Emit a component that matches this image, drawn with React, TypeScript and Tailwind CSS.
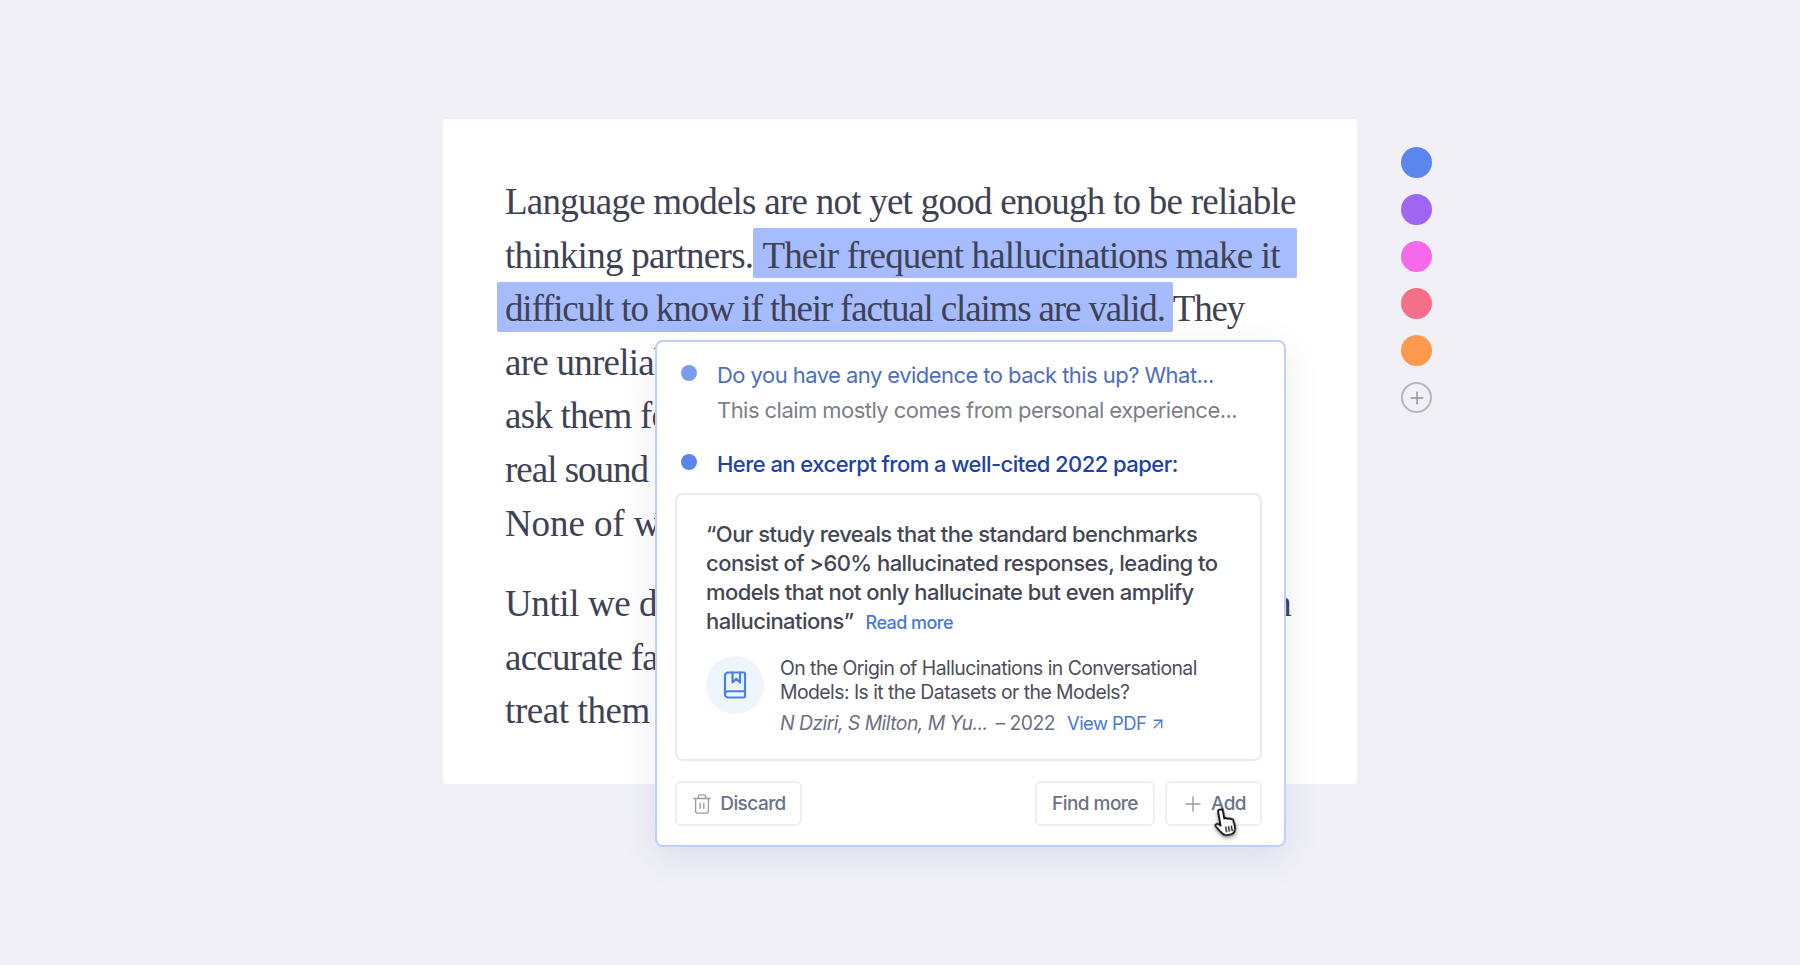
import { ArrowUpRight, BookMarked, Plus, Trash2 } from "lucide-react";

const swatches = ["bg-[#5b87ec]", "bg-[#a066f2]", "bg-[#f569ea]", "bg-[#f66f88]", "bg-[#fd9a4f]"];

const lines = [
  { id: "l1", cls: "tracking-[-0.75px]", text: <>Language models are not yet good enough to be reliable</> },
  {
    id: "l2",
    cls: "tracking-[-0.7px]",
    text: (
      <>
        thinking partners.
        <span className="rounded-[2px] bg-[#a6bcff] pb-[2px] pl-[9px] pr-[17px] pt-[7px] tracking-[-0.85px]">Their frequent hallucinations make it</span>
      </>
    ),
  },
  {
    id: "l3",
    cls: "tracking-[-1.15px]",
    text: (
      <>
        <span className="-ml-2 rounded-[2px] bg-[#a6bcff] pb-[3px] pl-2 pr-2 pt-[6px]">
          difficult to know if their factual claims are valid.
        </span>
        They
      </>
    ),
  },
  { id: "l4", cls: "tracking-[-0.75px]", text: <>are unreliable</> },
  { id: "l5", cls: "tracking-[-0.75px]", text: <>ask them for</> },
  { id: "l6", cls: "tracking-[-1px]", text: <>real sound</> },
  { id: "l7", cls: "tracking-[-0.1px]", text: <>None of which</> },
];

const secondLines = [
  { id: "s1", cls: "tracking-[-0.4px]", text: "Until we draw on more reliable sources of information" },
  { id: "s2", cls: "tracking-[-0.75px]", text: "accurate facts" },
  { id: "s3", cls: "tracking-[-0.4px]", text: "treat them with" },
];

function Swatches() {
  return (
    <div className="ml-[44px] mt-[28px] flex flex-col gap-4">
      {swatches.map((color) => (
        <span key={color} className={`h-[31px] w-[31px] rounded-full ${color}`} />
      ))}
      <span className="flex h-[31px] w-[31px] items-center justify-center rounded-full border-2 border-[#b5b6c6] text-[#8e90a3]">
        <Plus size={20} strokeWidth={1.75} />
      </span>
    </div>
  );
}

function HandCursor() {
  return (
    <svg
      className="absolute left-[556px] top-[464px] rotate-[-10deg] drop-shadow-[0_2px_2px_rgba(0,0,0,0.45)]"
      width="27"
      height="32"
      viewBox="0 0 24 30"
      fill="none"
    >
      <path
        d="M8.5 2.5c1.2 0 2 .9 2 2v7l1-.3c1 0 1.6.4 1.9 1 .9-.5 2.2-.2 2.6.8 1-.4 2.2.1 2.5 1.2l.5 7c0 3-2 6-5 6h-4c-2 0-3-1-4-2.5l-4.5-7c-.7-1.2 0-2.2.9-2.5 1-.2 1.8.2 2.6 1.2l.9 1V4.5c0-1.1.8-2 2-2z"
        fill="white"
        stroke="black"
        strokeWidth="1.6"
        strokeLinejoin="round"
      />
      <path d="M10.5 19.5v4.5M13.2 19.5v4.5M15.9 19.5v4.5" stroke="black" strokeWidth="1.2" strokeLinecap="round" />
    </svg>
  );
}

function Popup() {
  return (
    <div className="absolute left-[212px] top-[221px] h-[507px] w-[631px] rounded-lg border-2 border-[#c0cff7] bg-white px-[18px] font-['Inter',sans-serif] tracking-[-0.55px] shadow-[0_10px_36px_rgba(60,70,120,0.1)]">
      <div className="flex items-start gap-[20px] pt-[15px]">
        <span className="ml-[6px] mt-[8px] h-4 w-4 shrink-0 rounded-full bg-[#7a9bee]" />
        <div>
          <p className="text-[22px] leading-[36px] text-[#4f6dbd]">Do you have any evidence to back this up? What...</p>
          <p className="text-[22px] leading-[35px] text-[#7d7f8a]">This claim mostly comes from personal experience...</p>
        </div>
      </div>
      <div className="mt-[18px] flex items-start gap-[20px]">
        <span className="ml-[6px] mt-[8px] h-4 w-4 shrink-0 rounded-full bg-[#5b85ea]" />
        <p className="text-[22px] font-medium leading-[36px] text-[#2242a3]">Here an excerpt from a well-cited 2022 paper:</p>
      </div>
      <div className="mt-[11px] h-[268px] w-[587px] rounded-lg border-2 border-[#e7eaf6] pl-[29px] pt-[25px]">
        <p className="w-[530px] text-[22px] font-medium leading-[29px] text-[#444653]">
          “Our study reveals that the standard benchmarks consist of &gt;60% hallucinated responses, leading to models that not only hallucinate but even amplify hallucinations”
          <span className="ml-3 text-[18px] text-[#4a78d8]">Read more</span>
        </p>
        <div className="mt-[19px] flex gap-4">
          <span className="flex h-[58px] w-[58px] shrink-0 items-center justify-center rounded-full bg-[#eef5fd] text-[#4a80e6]">
            <BookMarked size={30} strokeWidth={1.75} />
          </span>
          <div>
            <p className="text-[19.4px] leading-[24px] text-[#4c4e5a]">
              On the Origin of Hallucinations in Conversational
              <br />
              Models: Is it the Datasets or the Models?
            </p>
            <p className="mt-[8px] flex items-center text-[19.4px] leading-[23px] text-[#6d7081]">
              <span className="italic">N Dziri, S Milton, M Yu...</span>
              <span className="ml-[8px]">– 2022</span>
              <span className="ml-3 text-[18.4px] text-[#4a78d8]">View PDF</span>
              <ArrowUpRight className="ml-[3px] text-[#4a78d8]" size={18} strokeWidth={1.75} />
            </p>
          </div>
        </div>
      </div>
      <div className="mr-[4px] mt-[20px] flex items-center text-[19px] font-medium text-[#6b7287]">
        <button className="flex h-[45px] w-[127px] items-center justify-center gap-[7px] rounded-md border-2 border-[#eeeff5]">
          <Trash2 className="text-[#9a9cab]" size={22} strokeWidth={1.5} />
          Discard
        </button>
        <button className="ml-auto flex h-[45px] w-[120px] items-center justify-center rounded-md border-2 border-[#eeeff5]">
          Find more
        </button>
        <button className="ml-[10px] flex h-[45px] w-[97px] items-center justify-center gap-[6px] rounded-md border-2 border-[#eeeff5]">
          <Plus className="text-[#9a9cab]" size={24} strokeWidth={1.5} />
          Add
        </button>
      </div>
      <HandCursor />
    </div>
  );
}

export default function App() {
  return (
    <div className="flex min-h-[965px] items-start bg-[#f0f0f6] pl-[443px] pt-[119px]">
      <div className="relative h-[665px] w-[914px] rounded-[3px] bg-white pl-[62px] pt-[56px] font-['Liberation_Serif',serif] text-[37px] leading-[53.6px] text-[#404254]">
        {lines.map((line) => (
          <div key={line.id} className={`relative whitespace-nowrap ${line.cls}`}>
            {line.text}
          </div>
        ))}
        <div className="mt-[27px]">
          {secondLines.map((line) => (
            <div key={line.id} className={`whitespace-nowrap ${line.cls}`}>
              {line.text}
            </div>
          ))}
        </div>
        <Popup />
      </div>
      <Swatches />
    </div>
  );
}
